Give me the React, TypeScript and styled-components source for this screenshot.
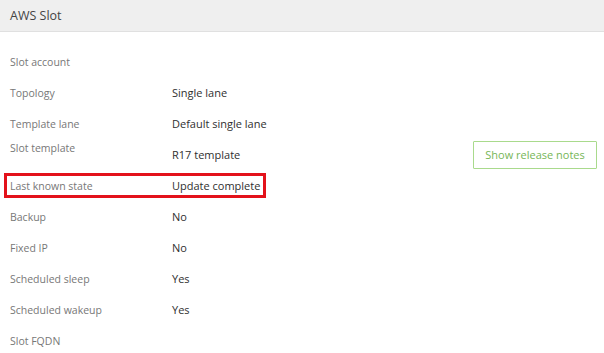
import React from 'react'
import styled, { createGlobalStyle } from 'styled-components'

const labelGrey = '#777777';
const valueDark = '#2f2f2f';
const green = '#76b657';

const GlobalStyle = createGlobalStyle`
  body {
    margin: 0;
    background: #ffffff;
    font-family: "Open Sans", "Noto Sans", sans-serif;
  }
`

const Panel = styled.div`
  width: 604px;
  height: 353px;
  overflow: hidden;
  background: #fff;
`

const Header = styled.header`
  height: 31px;
  display: flex;
  align-items: center;
  padding: 0 10px;
  background: #efefef;
  border-bottom: 1px solid #e0e0e0;
  font-size: 12.5px;
  color: #444;
`

const Details = styled.div`
  padding: 14px 7px 0 10px;
  display: flex;
  flex-direction: column;
`

const Row = styled.div<{ $marked?: boolean }>`
  position: relative;
  height: 31px;
  display: grid;
  grid-template-columns: 162px 1fr auto;
  align-items: center;
  font-size: 10.5px;

  ${p => p.$marked && `
    &::after {
      content: '';
      position: absolute;
      left: -6px;
      top: 3px;
      width: 262px;
      height: 25px;
      box-sizing: border-box;
      border: 3px solid #e3121b;
    }
  `}
`

const Label = styled.span<{ $top?: boolean }>`
  color: ${labelGrey};
  align-self: ${p => (p.$top ? 'start' : 'center')};
  line-height: 16px;
  padding-top: ${p => (p.$top ? '1px' : '0')};
`

const Value = styled.span`
  color: ${valueDark};
  font-size: 11px;
`

const NotesButton = styled.button`
  height: 28px;
  width: 124px;
  box-sizing: border-box;
  border: 1px solid #a9da8c;
  border-radius: 1px;
  background: #fff;
  color: ${green};
  font-family: inherit;
  font-size: 11px;
  cursor: pointer;
`

const rows: { label: string; value?: string }[] = [
  { label: 'Slot account' },
  { label: 'Topology', value: 'Single lane' },
  { label: 'Template lane', value: 'Default single lane' },
  { label: 'Slot template', value: 'R17 template' },
  { label: 'Last known state', value: 'Update complete' },
  { label: 'Backup', value: 'No' },
  { label: 'Fixed IP', value: 'No' },
  { label: 'Scheduled sleep', value: 'Yes' },
  { label: 'Scheduled wakeup', value: 'Yes' },
  { label: 'Slot FQDN' },
]

export default function App() {
  return (
    <Panel>
      <GlobalStyle />
      <Header>AWS Slot</Header>
      <Details>
        {rows.map(r => {
          const isTemplate = r.label === 'Slot template';
          return (
            <Row key={r.label} $marked={r.label === 'Last known state'}>
              <Label $top={isTemplate}>{r.label}</Label>
              <Value>{r.value ?? ''}</Value>
              {isTemplate ? <NotesButton>Show release notes</NotesButton> : <span />}
            </Row>
          );
        })}
      </Details>
    </Panel>
  )
}
